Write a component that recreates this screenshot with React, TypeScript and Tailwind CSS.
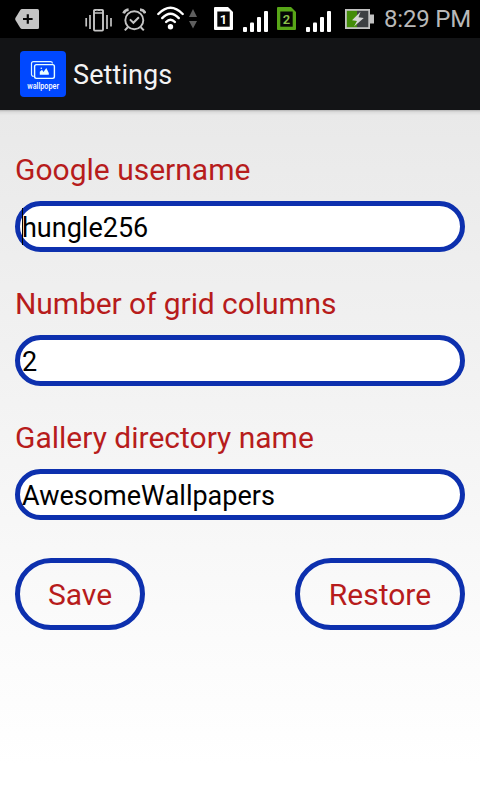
import React from "react";

const SignalBars = (props: { className?: string }) => (
  <svg viewBox="0 0 25 22" className={`h-[22px] w-[25px] ${props.className ?? ""}`} fill="#fff">
    <rect x="0" y="17" width="4" height="5" rx="1" />
    <rect x="7" y="12.5" width="4" height="9.5" rx="1" />
    <rect x="14" y="7" width="4" height="15" rx="1" />
    <rect x="21" y="1" width="4" height="21" rx="1" />
  </svg>
);

const SimCard = (props: { label: string; className?: string; frame: string; color: string }) => (
  <svg viewBox="0 0 19 23" className={`h-[23px] w-[19px] ${props.className ?? ""}`}>
    <path d="M1 0H14L19 5V22Q19 23 18 23H1Q0 23 0 22V1Q0 0 1 0Z" fill={props.frame} />
    <path d="M3.3 4.5H15.7V19.7H3.3Z" fill="#050505" />
    <text x="9.5" y="17" textAnchor="middle" fontSize="13" fontWeight="600" fill={props.color} className="font-['Roboto',sans-serif]">
      {props.label}
    </text>
  </svg>
);

const StatusBar = () => (
  <div className="flex h-[38px] items-start bg-black">
    <svg viewBox="0 0 24 20" className="mt-[9px] ml-[15px] h-5 w-6">
      <path d="M7 0H22.5Q24 0 24 1.5V18.5Q24 20 22.5 20H7Q6 20 5.3 19L.4 11Q0 10 .4 9L5.3 1Q6 0 7 0Z" fill="#c4c4c4" />
      <path d="M12.8 5.2V14.8M8 10H17.6" stroke="#080808" strokeWidth="2.2" />
    </svg>
    <svg viewBox="0 0 28 24" className="mt-2 ml-[46px] h-6 w-7" fill="none" stroke="#c4c4c4">
      <rect x="9" y="2" width="9" height="20.6" rx=".8" strokeWidth="1.9" />
      <path d="M9 5H18" strokeWidth="1.5" />
      <path d="M11 3.4H13M15 3.4H16.6" stroke="#111" strokeWidth="1.2" />
      <path d="M1.2 10V18.5M5 7V21M22 7V21M26 10V18.5" strokeWidth="1.7" />
    </svg>
    <svg viewBox="0 0 24 24" className="mt-2 ml-[9px] h-6 w-6" fill="none" stroke="#c4c4c4" strokeWidth="1.9">
      <circle cx="12.3" cy="12.3" r="9" />
      <path d="M7.9 11.4L11.4 14.8L16.9 9.2" strokeWidth="2" />
      <path d="M1.6 5.4Q2.8 2 6.6 1.6M18 1.6Q22 2 23.2 5.4" strokeWidth="2.8" />
      <path d="M5.8 19.2L2.8 22.4M18.8 19.2L21.8 22.4" strokeWidth="2" />
    </svg>
    <svg viewBox="0 0 27 24" className="mt-1.5 ml-[11px] h-6 w-[27px]" fill="none" stroke="#fff" strokeWidth="2.4" strokeLinecap="round">
      <path d="M1.3 8Q13.5 -4.5 25.7 8" />
      <path d="M5.2 12.1Q13.5 3.4 21.8 12.1" />
      <path d="M9.1 16Q13.5 11.4 17.9 16" />
      <circle cx="13.5" cy="20.7" r="2.7" fill="#fff" stroke="none" />
    </svg>
    <svg viewBox="0 0 8 20" className="mt-[9px] ml-[5px] h-5 w-2" fill="#5f5f5f">
      <path d="M4 0L8 8H0ZM0 12H8L4 19.5Z" />
    </svg>
    <SimCard label="1" className="mt-[7px] ml-[17px]" frame="#fff" color="#fff" />
    <SignalBars className="mt-[10px] ml-[10px]" />
    <SimCard label="2" className="mt-[7px] ml-[9px]" frame="#58a618" color="#8bc34a" />
    <SignalBars className="mt-[10px] ml-[10px]" />
    <svg viewBox="0 0 29 20" className="mt-[9px] ml-[14px] h-5 w-[29px]">
      <path d="M0 0H25V5.5H29V14.5H25V20H0Z" fill="#c2c2c2" />
      <path d="M1.8 1.8H12V18.2H1.8Z" fill="#438c09" />
      <path d="M12 1.8H23.3V18.2H12Z" fill="#3d4043" />
      <path d="M15.5 2.8L7 11.2L12 12L9 17.5L18.8 9L13.5 8.2Z" fill="#d5d5d5" />
    </svg>
    <span className="mt-1 ml-[10px] text-[24px] leading-[30px] tracking-[-0.2px] whitespace-nowrap text-[#b8b8b8]">8:29 PM</span>
  </div>
);

const AppIcon = () => (
  <svg viewBox="0 0 46 46" className="h-[46px] w-[46px]" fill="none">
    <rect width="46" height="46" rx="4" fill="#0048ff" />
    <path d="M13.7 25.4H13Q11.5 25 11.5 23.5V12.5Q11.5 10.6 13.5 10.6H30.5Q32.3 10.6 32.5 12.5" stroke="#dff5ff" strokeWidth="1.2" />
    <rect x="14.6" y="13.6" width="19.8" height="13.8" rx="1.8" stroke="#e9ffff" strokeWidth="1.4" />
    <path d="M19.8 23.8V20.8L22 18.8L23.5 21L26.3 17L28.8 22V23.8Z" fill="#e9ffff" />
    <circle cx="21.3" cy="17.2" r=".8" fill="#e9ffff" />
    <text x="7.3" y="37.5" fontSize="8.6" fontWeight="500" textLength="31.7" lengthAdjust="spacingAndGlyphs" fill="#fff" className="font-['Roboto',sans-serif]">
      wallpoper
    </text>
  </svg>
);

const Field = (props: { label: string; value: string; focused?: boolean; labelClass?: string }) => (
  <label className="flex flex-col">
    <span className={`h-[51px] pt-[2px] text-[30px] leading-[35px] whitespace-nowrap text-[#b71c1c] ${props.labelClass ?? ""}`}>{props.label}</span>
    <span className="flex h-[51px] rounded-full border-5 border-[#0d30ae] bg-white pt-[4px] pl-[2px]">
      <span className={`relative text-[27px] leading-[37px] whitespace-nowrap text-black ${props.focused ? "before:absolute before:top-[-2px] before:left-0 before:h-[37px] before:w-px before:bg-black" : ""}`}>
        {props.value}
      </span>
    </span>
  </label>
);

const PillButton = (props: { className: string; children: React.ReactNode }) => (
  <button type="button" className={`h-[72px] rounded-full border-5 border-[#0d30ae] text-[30px] leading-[35px] text-[#b71c1c] ${props.className}`}>
    {props.children}
  </button>
);

const fields = [
  { label: "Google username", value: "hungle256", focused: true },
  { label: "Number of grid columns", value: "2", labelClass: "tracking-[-0.08px]" },
  { label: "Gallery directory name", value: "AwesomeWallpapers" },
];

export default function App() {
  return (
    <div className="flex h-[800px] w-[480px] flex-col overflow-hidden bg-black font-['Roboto',sans-serif]">
      <StatusBar />
      <header className="flex h-[72px] items-center gap-[7px] bg-[#131416] pl-5">
        <AppIcon />
        <h1 className="pt-[2px] text-[27px] leading-[36px] tracking-[0.1px] text-[#f3f3f3]">Settings</h1>
      </header>
      <main className="flex flex-1 flex-col bg-linear-to-b from-[#e9e9e9] via-[#fafafa] via-72% to-white to-95%">
        <div className="h-[5px] bg-linear-to-b from-[#b4b4b4] via-[#dcdcdc] via-40% to-[#e8e8e8]" />
        <form className="flex flex-col gap-8 px-[15px] pt-[35px]">
          {fields.map((field) => (
            <Field key={field.label} {...field} />
          ))}
          <div className="mt-[6px] flex justify-between">
            <PillButton className="w-[130px]">Save</PillButton>
            <PillButton className="w-[170px]">Restore</PillButton>
          </div>
        </form>
      </main>
    </div>
  );
}
